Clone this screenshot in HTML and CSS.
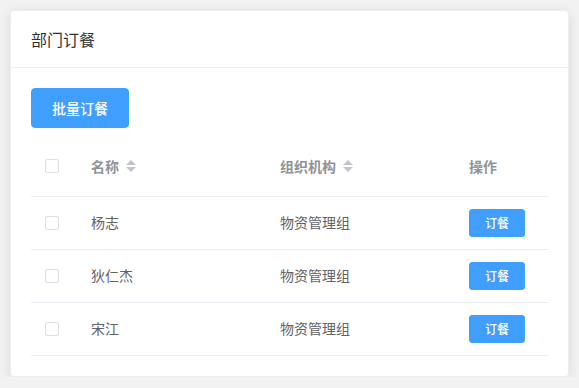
FILE: index.html
```html
<!DOCTYPE html>
<html lang="zh-CN">
<head>
<meta charset="utf-8">
<link rel="stylesheet" href="styles.css">
</head>
<body>
<div class="card">
  <div class="card-header">部门订餐</div>
  <div class="card-body">
    <button class="btn btn-primary">批量订餐</button>
    <table class="table">
      <colgroup>
        <col class="c-sel"><col class="c-name"><col class="c-org"><col class="c-op">
      </colgroup>
      <thead>
        <tr>
          <th class="sel"><span class="checkbox"></span></th>
          <th><div class="cell">名称<span class="caret"><i class="up"></i><i class="down"></i></span></div></th>
          <th><div class="cell">组织机构<span class="caret"><i class="up"></i><i class="down"></i></span></div></th>
          <th><div class="cell">操作</div></th>
        </tr>
      </thead>
      <tbody>
        <tr>
          <td class="sel"><span class="checkbox"></span></td>
          <td><div class="cell">杨志</div></td>
          <td><div class="cell">物资管理组</div></td>
          <td><div class="cell"><button class="btn btn-primary btn-mini">订餐</button></div></td>
        </tr>
        <tr>
          <td class="sel"><span class="checkbox"></span></td>
          <td><div class="cell">狄仁杰</div></td>
          <td><div class="cell">物资管理组</div></td>
          <td><div class="cell"><button class="btn btn-primary btn-mini">订餐</button></div></td>
        </tr>
        <tr>
          <td class="sel"><span class="checkbox"></span></td>
          <td><div class="cell">宋江</div></td>
          <td><div class="cell">物资管理组</div></td>
          <td><div class="cell"><button class="btn btn-primary btn-mini">订餐</button></div></td>
        </tr>
      </tbody>
    </table>
  </div>
</div>
</body>
</html>
```

FILE: styles.css
```css
* { box-sizing: border-box; }
html, body { margin: 0; padding: 0; }
body {
  background: #f2f2f2;
  font-family: "Noto Sans CJK SC", "Noto Sans", sans-serif;
  font-size: 14px;
  color: #606266;
  padding: 10px 10px 0 10px;
}
.card {
  width: 559px;
  background: #fff;
  border: 1px solid #ebeef5;
  border-radius: 4px;
  box-shadow: 0 2px 12px 0 rgba(0,0,0,0.1);
  overflow: hidden;
}
.card-header {
  padding: 18px 20px;
  border-bottom: 1px solid #ebeef5;
  font-size: 16px;
  line-height: 20px;
  color: #303133;
}
.card-body { padding: 20px; }
.btn {
  display: inline-block;
  border: 1px solid #409eff;
  background: #409eff;
  color: #fff;
  font-family: inherit;
  font-size: 14px;
  line-height: 14px;
  padding: 12px 20px;
  border-radius: 4px;
  font-weight: 500;
  height: 40px;
  cursor: pointer;
}
.btn-mini {
  font-size: 12px;
  line-height: 12px;
  padding: 7px 15px;
  height: 28px;
  border-radius: 3px;
  vertical-align: middle;
}
.table {
  width: 518px;
  margin-top: 9px;
  border-collapse: collapse;
  table-layout: fixed;
}
.c-sel { width: 50px; }
.c-name { width: 189px; }
.c-org { width: 189px; }
.c-op { width: 90px; }
.table th, .table td {
  padding: 12px 0;
  border-bottom: 1px solid #ebeef5;
  text-align: left;
  vertical-align: middle;
}
.table th {
  color: #909399;
  font-weight: bold;
  height: 59px;
}
.table td { height: 53px; }
.cell {
  padding: 0 10px;
  line-height: 23px;
  display: flex;
  align-items: center;
}
.sel { padding-left: 14px !important; }
.checkbox {
  display: block;
  width: 14px;
  height: 14px;
  border: 1px solid #dcdfe6;
  border-radius: 2px;
  background: #fff;
}
.caret {
  display: inline-flex;
  flex-direction: column;
  align-items: center;
  justify-content: center;
  width: 24px;
  height: 34px;
  gap: 2px;
  margin-top: -1px;
}
.caret i {
  display: block;
  width: 0;
  height: 0;
  border: 5px solid transparent;
}
.caret .up { border-bottom-color: #c0c4cc; border-top-width: 0; }
.caret .down { border-top-color: #c0c4cc; border-bottom-width: 0; }
```
